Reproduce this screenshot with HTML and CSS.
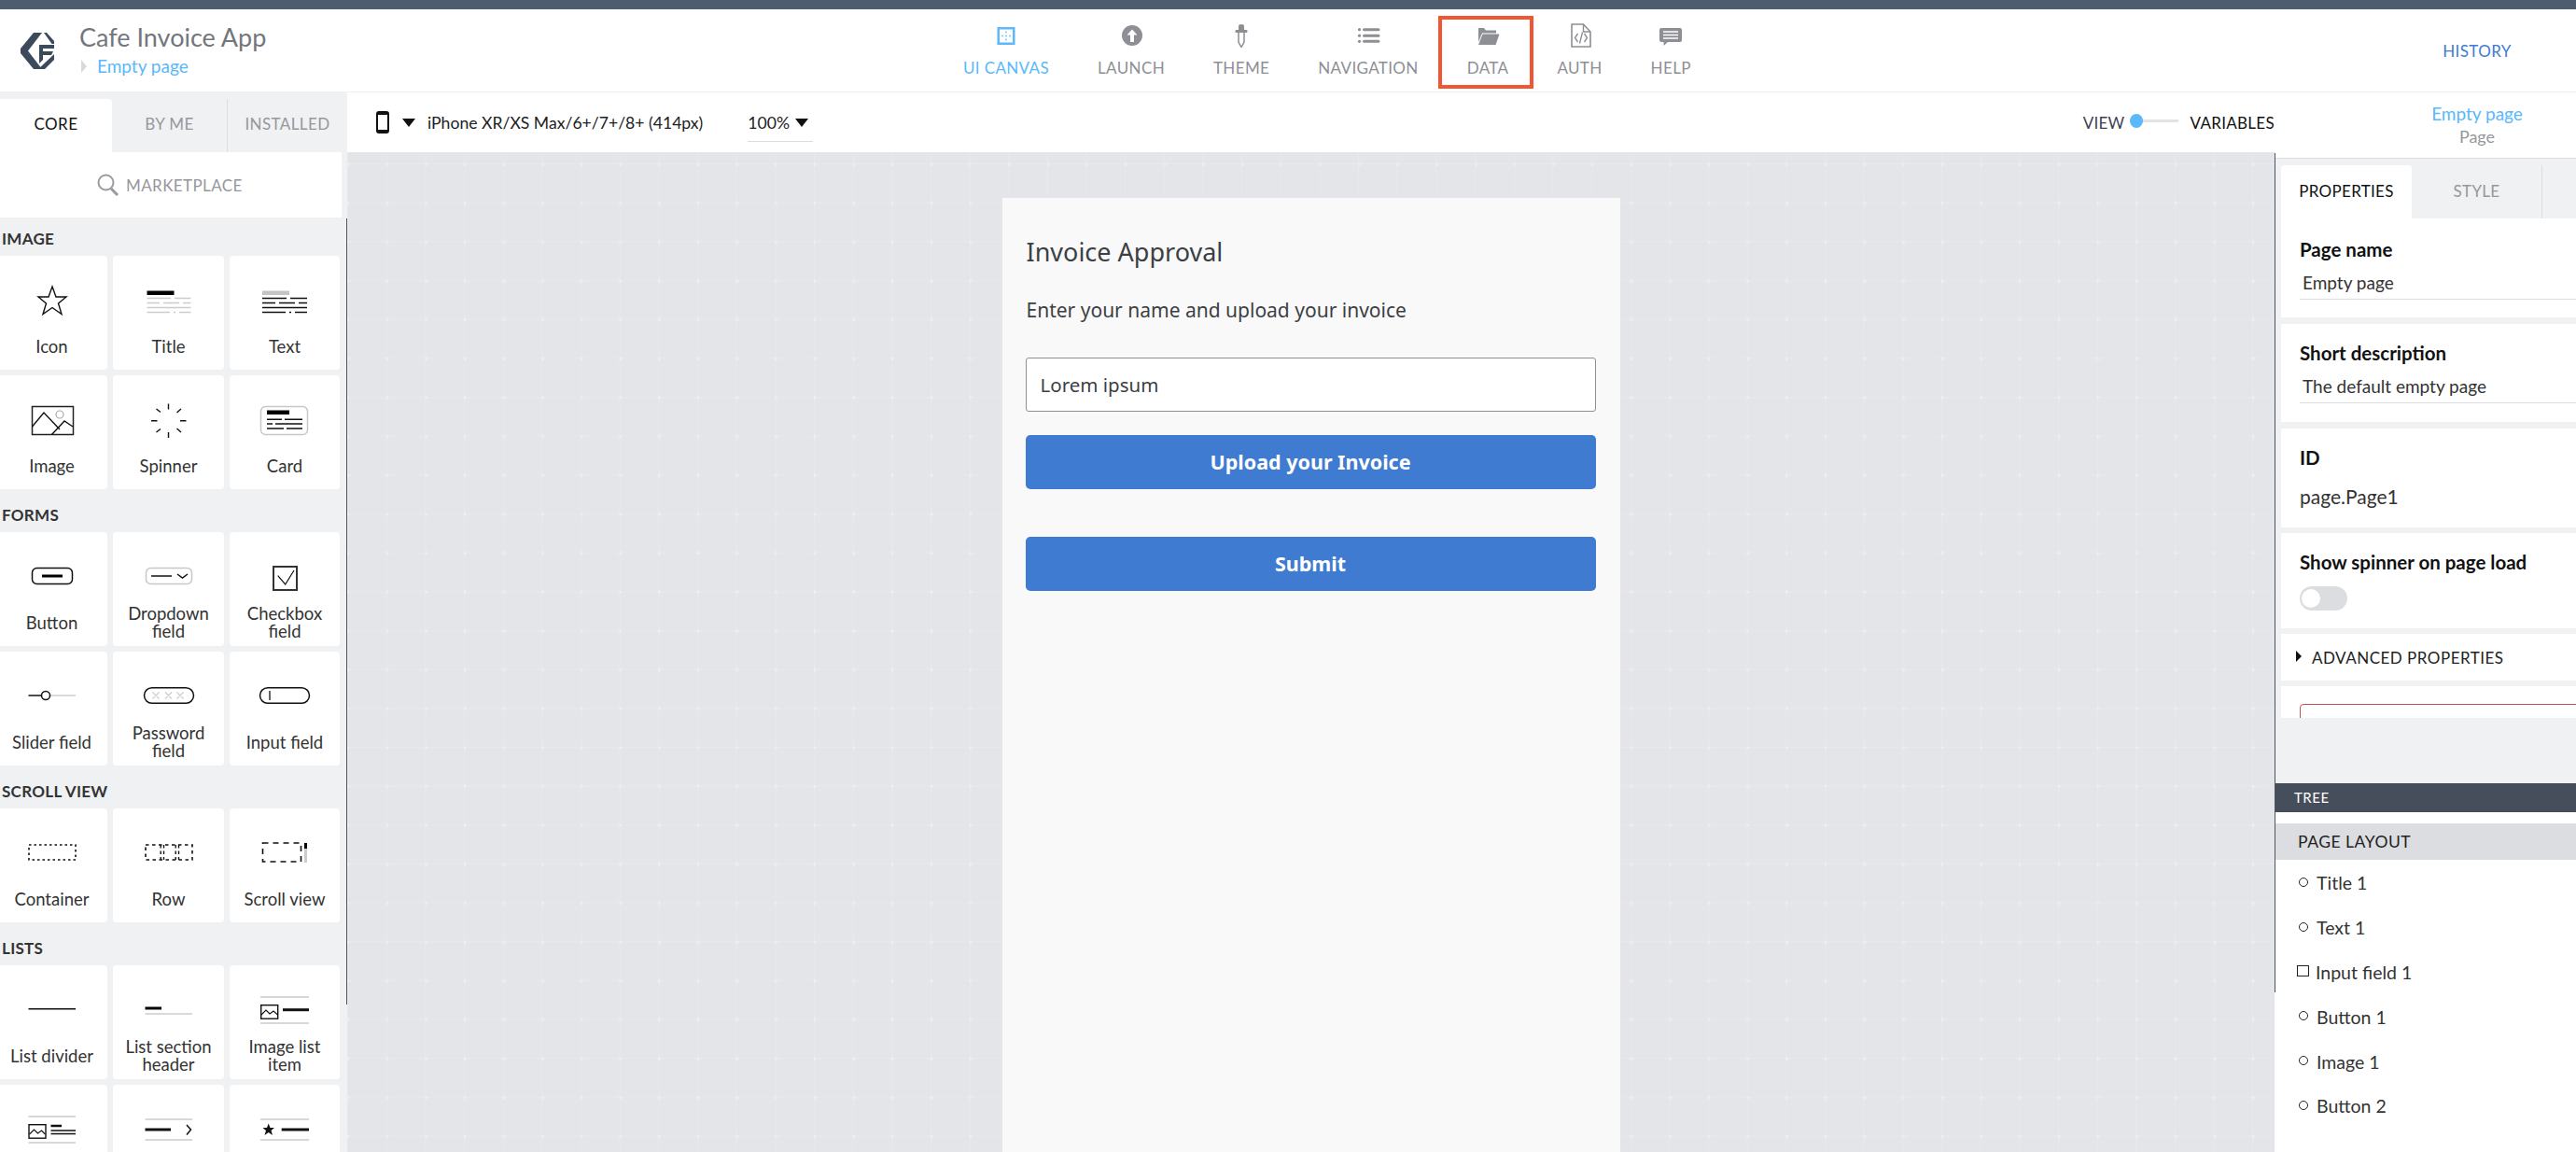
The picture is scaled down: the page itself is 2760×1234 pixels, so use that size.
FILE: index.html
```html
<!DOCTYPE html>
<html lang="en">
<head>
  <meta charset="UTF-8" />
  <title>Cafe Invoice App</title>
  <link rel="stylesheet" href="styles.css">
</head>
<body>
  <div class="topbar"></div>

  <header class="header">
    <div class="brand">
      <svg class="logo" width="36" height="39" viewBox="0 0 36 39">
        <path d="M14 0H23L8 19.5 23 39H14L0 22V17Z" />
        <path d="M25 0H28L36 9V12H33.5Z" />
        <path d="M20 13H36V17H24V20H35L33 24H24L24 29 20 33Z" />
        <path d="M36 23V29L26 39H19Z" />
      </svg>
      <div class="brand-text">
        <div class="app-name">Cafe Invoice App</div>
        <div class="crumb"><span class="crumb-arrow"></span>Empty page</div>
      </div>
    </div>

    <nav class="nav">
      <a class="nav-item active">
        <svg width="26" height="26" viewBox="0 0 26 26">
          <rect x="4.75" y="5.25" width="16.5" height="16.5" fill="none" stroke="#5ab8fb" stroke-width="2.5" />
          <g fill="#7cc6fb"><circle cx="13" cy="9.5" r="1" /><circle cx="9" cy="13.5" r="1" /><circle cx="13" cy="13.5" r="1" /><circle cx="17" cy="13.5" r="1" /><circle cx="13" cy="17.5" r="1" /></g>
        </svg>
        UI CANVAS
      </a>
      <a class="nav-item">
        <svg width="26" height="26" viewBox="0 0 26 26">
          <circle cx="14" cy="13" r="11" fill="#8e8f94" />
          <path d="M14 6.5L8.5 12.5H12V20H16V12.5H19.5Z" fill="#fff" />
        </svg>
        LAUNCH
      </a>
      <a class="nav-item">
        <svg width="26" height="26" viewBox="0 0 26 26">
          <path d="M10 7V3a3 2 0 0 1 6 0V7Z" fill="#8e8f94" />
          <rect x="6.5" y="7" width="13" height="3" rx="1" fill="#8e8f94" />
          <path d="M10 10V20L13 25.5 16 20V10" fill="none" stroke="#8e8f94" stroke-width="1.5" />
        </svg>
        THEME
      </a>
      <a class="nav-item">
        <svg width="26" height="26" viewBox="0 0 26 26">
          <g fill="#8e8f94"><circle cx="3.5" cy="6.7" r="1.6" /><circle cx="3.5" cy="13.2" r="1.6" /><circle cx="3.5" cy="19.3" r="1.6" /></g>
          <path d="M8.5 6.7H24M8.5 13.2H24M8.5 19.3H24" stroke="#8e8f94" stroke-width="3" stroke-linecap="round" />
        </svg>
        NAVIGATION
      </a>
      <a class="nav-item nav-marked">
        <svg width="26" height="26" viewBox="0 0 26 26">
          <path d="M3 5H9L11 7.5H22V10.5H7L3 20Z" fill="#8e8f94" />
          <path d="M7.5 11.5H25.5L21.5 23H3Z" fill="#8e8f94" />
        </svg>
        DATA
      </a>
      <a class="nav-item">
        <svg width="26" height="26" viewBox="0 0 26 26" fill="none" stroke="#8e8f94">
          <path d="M4 1H16.5L24 9V25H4Z" stroke-width="1.6" />
          <path d="M16.5 1V9H24" stroke-width="1.4" />
          <path d="M10.5 11L7.5 15.5 10.5 20M17.5 11L20.5 15.5 17.5 20M15.5 9.5L12.5 21.5" stroke-width="1.4" />
        </svg>
        AUTH
      </a>
      <a class="nav-item">
        <svg width="26" height="26" viewBox="0 0 26 26">
          <path d="M3 5H23A2 2 0 0 1 25 7V18A2 2 0 0 1 23 20H10L5.5 24V20H3A2 2 0 0 1 1 18V7A2 2 0 0 1 3 5Z" fill="#8e8f94" />
          <path d="M5 9H21M5 12.5H21M5 16H21" stroke="#fff" stroke-width="1.3" />
        </svg>
        HELP
      </a>
    </nav>

    <a class="history">HISTORY</a>
  </header>

  <div class="workspace">
    <aside class="sidebar">
      <div class="side-tabs">
        <div class="side-tab active">CORE</div>
        <div class="side-tab sep">BY ME</div>
        <div class="side-tab last">INSTALLED</div>
      </div>
      <div class="marketplace">
        <svg width="24" height="24" viewBox="0 0 24 24" fill="none" stroke="#9a9ba0">
          <circle cx="9.5" cy="9.5" r="8" stroke-width="2" />
          <path d="M15 16L22 23" stroke-width="3" />
        </svg>
        MARKETPLACE
      </div>

      <div class="section-label first">IMAGE</div>
      <div class="widgets">
        <div class="widget">
          <svg class="widget-icon" viewBox="0 0 56 40"><path d="M28 5L32 16H43L34.5 23 38 34.5 28 27.5 18 34.5 21.5 23 13 16H24Z" fill="none" stroke="#111" stroke-width="1.4" /></svg>
          <div class="widget-name">Icon</div>
        </div>
        <div class="widget">
          <svg class="widget-icon" viewBox="0 0 56 40">
            <rect x="4.5" y="9.5" width="29" height="4.5" fill="#000" />
            <path d="M4.5 17.5H30M34 17.5H51.5M4.5 22.5H18M22 22.5H39M43 22.5H51.5M4.5 27.5H51.5M4.5 32.5H29M33 32.5H35M39 32.5H51.5" stroke="#ccc" stroke-width="1.5" />
          </svg>
          <div class="widget-name">Title</div>
        </div>
        <div class="widget">
          <svg class="widget-icon" viewBox="0 0 56 40">
            <rect x="4" y="9.5" width="29" height="4.5" fill="#c4c4c4" />
            <path d="M4 17.5H30M34 17.5H52M4 22.5H18M22 22.5H39M43 22.5H52M4 27.5H52M4 32.5H29M33 32.5H35M39 32.5H52" stroke="#111" stroke-width="1.5" />
          </svg>
          <div class="widget-name">Text</div>
        </div>
        <div class="widget">
          <svg class="widget-icon" viewBox="0 0 56 40">
            <rect x="6.5" y="5.5" width="44" height="30" fill="none" stroke="#222" stroke-width="1.5" />
            <path d="M6.5 27L19 12 36 30M27.5 35.5L41 21 50 27" fill="none" stroke="#111" stroke-width="1.4" />
            <circle cx="36" cy="14" r="4" fill="none" stroke="#aaa" stroke-width="1.2" />
          </svg>
          <div class="widget-name">Image</div>
        </div>
        <div class="widget">
          <svg class="widget-icon" viewBox="0 0 56 40">
            <path d="M27.5 2.5V8.5M27.5 33V39M9 20.7H15.5M40 20.7H46.5M14.5 8L19 11.5M41 8L36.5 12M14.5 33L19 29.5M41 33L36.5 29" stroke="#111" stroke-width="1.4" />
          </svg>
          <div class="widget-name">Spinner</div>
        </div>
        <div class="widget">
          <svg class="widget-icon" viewBox="0 0 56 40">
            <rect x="2.5" y="5.5" width="50" height="30" rx="5" fill="none" stroke="#c8c8c8" stroke-width="1.5" />
            <rect x="9" y="9.5" width="24" height="4.5" fill="#000" />
            <path d="M9 19.3H25M28 19.3H47M9 24H15M18 24H47M9 29H27M30 29H47" stroke="#111" stroke-width="1.4" />
          </svg>
          <div class="widget-name">Card</div>
        </div>
      </div>

      <div class="section-label">FORMS</div>
      <div class="widgets">
        <div class="widget">
          <svg class="widget-icon" viewBox="0 0 56 40">
            <rect x="6.5" y="10.5" width="43" height="17" rx="5" fill="none" stroke="#111" stroke-width="1.5" />
            <path d="M17 19H39" stroke="#000" stroke-width="3" />
          </svg>
          <div class="widget-name">Button</div>
        </div>
        <div class="widget">
          <svg class="widget-icon" viewBox="0 0 56 40">
            <rect x="3.5" y="10.5" width="49" height="17" rx="5" fill="none" stroke="#c8c8c8" stroke-width="1.5" />
            <path d="M9 19H31" stroke="#111" stroke-width="1.5" />
            <path d="M37 17L42.5 21 48 17" fill="none" stroke="#111" stroke-width="1.5" />
          </svg>
          <div class="widget-name">Dropdown<br>field</div>
        </div>
        <div class="widget">
          <svg class="widget-icon" viewBox="0 0 56 40">
            <rect x="16" y="9" width="25" height="25" fill="none" stroke="#333" stroke-width="2" />
            <path d="M20.7 18.7L28.7 28 38 13" fill="none" stroke="#111" stroke-width="1.2" />
          </svg>
          <div class="widget-name">Checkbox<br>field</div>
        </div>
        <div class="widget">
          <svg class="widget-icon" viewBox="0 0 56 40">
            <path d="M2.5 19H16.5" stroke="#111" stroke-width="1.5" />
            <path d="M25.5 19H53" stroke="#ccc" stroke-width="1.5" />
            <circle cx="21" cy="19" r="4.5" fill="none" stroke="#111" stroke-width="1.5" />
          </svg>
          <div class="widget-name">Slider field</div>
        </div>
        <div class="widget">
          <svg class="widget-icon" viewBox="0 0 56 40">
            <rect x="1.5" y="10.7" width="53" height="16.6" rx="8.3" fill="none" stroke="#111" stroke-width="1.5" />
            <path d="M10.5 15.5L17.5 22.5M17.5 15.5L10.5 22.5M24 15.5L31 22.5M31 15.5L24 22.5M36.5 15.5L43.5 22.5M43.5 15.5L36.5 22.5" stroke="#ccc" stroke-width="1.2" />
          </svg>
          <div class="widget-name">Password<br>field</div>
        </div>
        <div class="widget">
          <svg class="widget-icon" viewBox="0 0 56 40">
            <rect x="1.5" y="10.7" width="53" height="16.6" rx="8.3" fill="none" stroke="#111" stroke-width="1.5" />
            <path d="M12 14V24" stroke="#111" stroke-width="1.3" />
          </svg>
          <div class="widget-name">Input field</div>
        </div>
      </div>

      <div class="section-label">SCROLL VIEW</div>
      <div class="widgets">
        <div class="widget">
          <svg class="widget-icon" viewBox="0 0 56 40">
            <rect x="3" y="11" width="50" height="16" fill="none" stroke="#111" stroke-width="1.6" stroke-dasharray="2.5 3" />
          </svg>
          <div class="widget-name">Container</div>
        </div>
        <div class="widget">
          <svg class="widget-icon" viewBox="0 0 56 40">
            <rect x="3" y="11" width="50" height="16" fill="none" stroke="#111" stroke-width="1.6" stroke-dasharray="3.5 3.5" />
            <path d="M19.2 11V27M22.5 11V27M35.2 11V27M38.5 11V27" stroke="#111" stroke-width="1.4" stroke-dasharray="3.5 3" />
          </svg>
          <div class="widget-name">Row</div>
        </div>
        <div class="widget">
          <svg class="widget-icon" viewBox="0 0 56 40">
            <rect x="4.5" y="9" width="41" height="20" fill="none" stroke="#111" stroke-width="1.6" stroke-dasharray="6 5" />
            <path d="M50.5 9V30" stroke="#ccc" stroke-width="3" />
            <path d="M50.5 9V15" stroke="#000" stroke-width="3" />
          </svg>
          <div class="widget-name">Scroll view</div>
        </div>
      </div>

      <div class="section-label">LISTS</div>
      <div class="widgets">
        <div class="widget">
          <svg class="widget-icon" viewBox="0 0 56 40"><path d="M2.5 18.7H53" stroke="#111" stroke-width="1.5" /></svg>
          <div class="widget-name">List divider</div>
        </div>
        <div class="widget">
          <svg class="widget-icon" viewBox="0 0 56 40">
            <path d="M2.5 18H20" stroke="#000" stroke-width="3" />
            <path d="M2.5 24H53" stroke="#ccc" stroke-width="1.5" />
          </svg>
          <div class="widget-name">List section<br>header</div>
        </div>
        <div class="widget">
          <svg class="widget-icon" viewBox="0 0 56 40">
            <path d="M2 6H54M2 34H54" stroke="#ccc" stroke-width="1.5" />
            <rect x="2.7" y="14.7" width="18" height="14.5" fill="none" stroke="#111" stroke-width="1.4" />
            <path d="M3 25L8 20 12 24 16 21 20.5 25" fill="none" stroke="#111" stroke-width="1.1" />
            <path d="M26 19.7H54" stroke="#111" stroke-width="3" />
          </svg>
          <div class="widget-name">Image list<br>item</div>
        </div>
        <div class="widget">
          <svg class="widget-icon" viewBox="0 0 56 40">
            <path d="M2.5 6H53M2.5 34H53" stroke="#ccc" stroke-width="1.5" />
            <rect x="3" y="14.7" width="18" height="14.5" fill="none" stroke="#111" stroke-width="1.4" />
            <path d="M3.5 25L8.5 20 12.5 24 16.5 21 20.5 25" fill="none" stroke="#111" stroke-width="1.1" />
            <path d="M26.5 16H38" stroke="#111" stroke-width="2.5" />
            <path d="M26.5 21H53M26.5 24.5H53" stroke="#111" stroke-width="1.4" />
          </svg>
        </div>
        <div class="widget">
          <svg class="widget-icon" viewBox="0 0 56 40">
            <path d="M2.5 9H53M2.5 31H53" stroke="#ccc" stroke-width="1.5" />
            <path d="M2.5 20H30" stroke="#111" stroke-width="3" />
            <path d="M47 15L51.5 20 47 25.5" fill="none" stroke="#111" stroke-width="1.5" />
          </svg>
        </div>
        <div class="widget">
          <svg class="widget-icon" viewBox="0 0 56 40">
            <path d="M2 9H54M2 31H54" stroke="#ccc" stroke-width="1.5" />
            <path d="M10.7 13.5L12.5 18H17L13.5 21 15 26 10.7 23 6.5 26 8 21 4.5 18H9Z" fill="#111" />
            <path d="M24.7 20H54" stroke="#111" stroke-width="3" />
          </svg>
        </div>
      </div>
    </aside>

    <main class="center">
      <div class="toolbar">
        <svg class="device-icon" width="14" height="24" viewBox="0 0 14 24">
          <rect x="1" y="1" width="12" height="22" rx="2" fill="none" stroke="#111" stroke-width="2" />
          <rect x="1" y="1" width="12" height="3" fill="#111" />
          <rect x="1" y="20" width="12" height="3" fill="#111" />
        </svg>
        <span class="caret"></span>
        <span class="device-name">iPhone XR/XS Max/6+/7+/8+ (414px)</span>
        <span class="zoom-select">100%<span class="caret"></span></span>
        <div class="view-switch">
          <span class="view-label">VIEW</span>
          <span class="switch-track"><span class="switch-knob"></span></span>
          <span class="view-vars">VARIABLES</span>
        </div>
      </div>

      <div class="canvas">
        <div class="phone">
          <h1 class="phone-title">Invoice Approval</h1>
          <p class="phone-text">Enter your name and upload your invoice</p>
          <div class="phone-input">Lorem ipsum</div>
          <button class="phone-btn">Upload your Invoice</button>
          <button class="phone-btn submit">Submit</button>
        </div>
      </div>
    </main>

    <aside class="inspector">
      <div class="inspector-inner">
        <div class="selected">
          <div class="selected-name">Empty page</div>
          <div class="selected-type">Page</div>
        </div>

        <div class="props-area">
          <div class="prop-tabs">
            <div class="prop-tab active">PROPERTIES</div>
            <div class="prop-tab sep">STYLE</div>
            <div class="prop-tab"></div>
          </div>

          <div class="props-scroll">
            <div class="prop prop-first">
              <div class="prop-label">Page name</div>
              <div class="prop-value field">Empty page</div>
            </div>
            <div class="prop prop-field">
              <div class="prop-label">Short description</div>
              <div class="prop-value field">The default empty page</div>
            </div>
            <div class="prop prop-id">
              <div class="prop-label">ID</div>
              <div class="prop-value id-value">page.Page1</div>
            </div>
            <div class="prop prop-toggle">
              <div class="prop-label">Show spinner on page load</div>
              <span class="toggle"><span class="toggle-knob"></span></span>
            </div>
            <div class="prop advanced"><span class="adv-arrow"></span>ADVANCED PROPERTIES</div>
            <div class="prop prop-danger"><div class="danger-box"></div></div>
          </div>
        </div>

        <div class="tree-bar">TREE</div>
        <div class="tree">
          <div class="tree-head">PAGE LAYOUT</div>
          <div class="tree-item"><span class="tree-dot"></span>Title 1</div>
          <div class="tree-item"><span class="tree-dot"></span>Text 1</div>
          <div class="tree-item"><span class="tree-dot square"></span>Input field 1</div>
          <div class="tree-item"><span class="tree-dot"></span>Button 1</div>
          <div class="tree-item"><span class="tree-dot"></span>Image 1</div>
          <div class="tree-item"><span class="tree-dot"></span>Button 2</div>
        </div>
      </div>
    </aside>
  </div>
</body>
</html>
```

FILE: styles.css
```css
* {
  box-sizing: border-box;
}
body {
  margin: 0;
  height: 100vh;
  overflow: hidden;
  background: #fff;
  font-family: Lato, "Open Sans", sans-serif;
  color: #222;
}

.topbar {
  height: 10px;
  background: #4d5c6e;
}

/* header */
.header {
  display: flex;
  height: 89px;
  border-bottom: 1px solid #f0f0f2;
}
.brand {
  display: flex;
  width: 1006px;
  padding: 25px 0 0 22px;
}
.logo {
  fill: #3c4a5d;
}
.brand-text {
  margin-left: 27px;
}
.app-name {
  margin-top: -10px;
  font-size: 27px;
  line-height: 30px;
  color: #73767d;
}
.crumb {
  display: flex;
  align-items: center;
  margin-top: 4px;
  font-size: 19px;
  line-height: 24px;
  color: #5ab8fb;
}
.crumb-arrow {
  width: 0;
  height: 0;
  margin: 0 11px 0 2px;
  border-left: 6px solid #d8d9dc;
  border-top: 7px solid transparent;
  border-bottom: 7px solid transparent;
}
.nav {
  display: flex;
}
.nav-item {
  position: relative;
  display: flex;
  flex-direction: column;
  align-items: center;
  padding: 15px 26px 0;
  font-size: 17px;
  line-height: 20px;
  letter-spacing: 0.36px;
  color: #8e8f94;
}
.nav-item svg {
  margin-bottom: 12px;
}
.nav-item.active {
  color: #5ab8fb;
}
.nav-marked::after {
  content: "";
  position: absolute;
  left: -5px;
  right: -1px;
  top: 7px;
  height: 70px;
  border: 4px solid #f15533;
}
.history {
  margin-left: auto;
  width: 212px;
  padding-top: 35px;
  text-align: center;
  font-size: 17px;
  line-height: 20px;
  letter-spacing: 0.4px;
  color: #3f7bd1;
}

/* main area */
.workspace {
  display: flex;
  height: 1135px;
}

/* left panel */
.sidebar {
  position: relative;
  flex: none;
  width: 372px;
  overflow: hidden;
  background: #f0f1f3;
}
.sidebar::after {
  content: "";
  position: absolute;
  left: 371px;
  top: 135px;
  width: 1px;
  height: 842px;
  background: #4a5464;
}
.side-tabs {
  display: flex;
  height: 64px;
  padding-top: 7px;
}
.side-tab {
  width: 123px;
  padding-top: 17px;
  text-align: center;
  font-size: 17px;
  line-height: 20px;
  letter-spacing: 0.4px;
  color: #96979c;
}
.side-tab.active {
  width: 120px;
  background: #fff;
  border-top-right-radius: 4px;
  color: #111;
}
.side-tab.sep {
  width: 124px;
  border-right: 1px solid #dcdde1;
}
.side-tab.last {
  width: 128px;
}
.marketplace {
  display: flex;
  align-items: center;
  justify-content: flex-start;
  gap: 7px;
  width: 366px;
  height: 70px;
  padding-left: 104px;
  background: #fff;
  font-size: 17px;
  letter-spacing: 0.4px;
  color: #96979c;
}
.section-label {
  height: 46px;
  padding: 17px 0 0 2px;
  font-size: 17px;
  font-weight: 700;
  line-height: 22px;
  letter-spacing: 0.3px;
  color: #333;
}
.section-label.first {
  height: 41px;
  padding-top: 12px;
}
.widgets {
  display: grid;
  grid-template-columns: 119px 119px 118px;
  grid-auto-rows: 122px;
  gap: 6px;
  margin-left: -4px;
}
.widget {
  padding-top: 28px;
  background: #fff;
  border-radius: 4px;
  text-align: center;
}
.widget-icon {
  display: block;
  width: 56px;
  height: 40px;
  margin: 0 auto;
  overflow: visible;
}
.widget-name {
  display: flex;
  align-items: center;
  justify-content: center;
  height: 38px;
  margin-top: 10px;
  font-size: 18.5px;
  line-height: 19px;
  color: #333;
}

/* center */
.center {
  flex: 1;
  min-width: 0;
  display: flex;
  flex-direction: column;
}
.toolbar {
  display: flex;
  align-items: center;
  flex: none;
  height: 64px;
  padding-left: 31px;
  font-size: 17.6px;
  color: #222;
}
.caret {
  display: inline-block;
  width: 0;
  height: 0;
  border-top: 9px solid #111;
  border-left: 7px solid transparent;
  border-right: 7px solid transparent;
}
.device-icon + .caret {
  margin-left: 14px;
}
.device-name {
  margin-left: 13px;
}
.zoom-select {
  display: flex;
  align-items: center;
  gap: 6px;
  width: 70px;
  height: 30px;
  margin-left: 48px;
  margin-top: 12px;
  padding-bottom: 10px;
  border-bottom: 1px solid #dcdde1;
}
.view-switch {
  display: flex;
  align-items: center;
  margin-left: auto;
  font-size: 17px;
  letter-spacing: 0.3px;
}
.view-label {
  color: #3c4350;
}
.switch-track {
  position: relative;
  width: 52px;
  height: 3px;
  margin: -3px 13px 0 5px;
  background: #e2e3e7;
}
.switch-knob {
  position: absolute;
  left: 0;
  top: -6px;
  width: 14px;
  height: 15px;
  border-radius: 50%;
  background: #5ab8fb;
}
.view-vars {
  color: #111;
}
.canvas {
  flex: 1;
  overflow: hidden;
  padding-top: 49px;
  background-color: #e4e5e9;
  background-image:
    radial-gradient(circle at 1px 13px, rgba(255,255,255,0.28) 1.5px, transparent 2px),
    linear-gradient(rgba(255,255,255,0.12) 1px, transparent 1px),
    linear-gradient(90deg, rgba(255,255,255,0.12) 1px, transparent 1px);
  background-size: 41.67px 41.67px;
  background-position: 0 0, 0 12px, 0 0;
}
.phone {
  width: 662px;
  height: 1200px;
  margin: 0 auto;
  padding: 40px 26px 0 25px;
  background: #f9f9f9;
  font-family: "Noto Sans", "Open Sans", sans-serif;
}
.phone-title {
  margin: 0;
  padding-left: 1px;
  font-size: 27px;
  font-weight: 400;
  line-height: 36px;
  color: #3c3f44;
}
.phone-text {
  margin: 29px 0 36px;
  padding-left: 1px;
  font-size: 21px;
  line-height: 30px;
  color: #3c3f44;
}
.phone-input {
  height: 58px;
  padding-left: 15px;
  background: #fff;
  border: 1px solid #8e9097;
  border-radius: 3px;
  font-size: 20.5px;
  line-height: 56px;
  color: #3c3f44;
}
.phone-btn {
  display: block;
  width: 100%;
  height: 58px;
  margin-top: 25px;
  padding-bottom: 3px;
  background-color: #3f7bd1;
  border: none;
  border-radius: 5px;
  color: white;
  font-family: inherit;
  font-size: 21.5px;
  font-weight: 700;
}
.phone-btn.submit {
  margin-top: 51px;
}

/* right panel */
.inspector {
  position: relative;
  flex: none;
  width: 323px;
  overflow: hidden;
}
.inspector::before {
  content: "";
  position: absolute;
  z-index: 1;
  left: 0;
  top: 65px;
  width: 1px;
  height: 899px;
  background: #4a5464;
}
.inspector-inner {
  width: 434px;
  padding-left: 1px;
}
.selected {
  height: 70px;
  padding: 11px 0 0 0;
  margin-left: -1px;
  text-align: center;
}
.selected-name {
  font-size: 19px;
  line-height: 24px;
  color: #5ab8fb;
}
.selected-type {
  font-size: 18px;
  line-height: 24px;
  color: #96979c;
}
.props-area {
  height: 670px;
  padding-top: 7px;
  border-top: 1px solid #dcdde1;
  background: #f0f1f3;
}
.prop-tabs {
  display: flex;
  height: 57px;
  margin-left: 6px;
}
.prop-tab {
  width: 140px;
  padding-top: 17px;
  text-align: center;
  font-size: 17px;
  line-height: 22px;
  letter-spacing: 0.3px;
  color: #96979c;
}
.prop-tab.active {
  background: #fff;
  border-radius: 4px 4px 0 0;
  color: #111;
}
.prop-tab.sep {
  border-right: 1px solid #dcdde1;
}
.props-scroll {
  height: 535px;
  margin-left: 6px;
  overflow: hidden;
}
.prop {
  margin-bottom: 6px;
  padding: 19px 20px 19px;
  background: #fff;
}
.prop-first {
  padding-top: 21px;
  margin-bottom: 7px;
}
.prop-field {
  padding-bottom: 20px;
  margin-bottom: 7px;
}
.prop-label {
  font-size: 20.5px;
  font-weight: 700;
  line-height: 24px;
  color: #111;
}
.prop-value {
  font-size: 19px;
  line-height: 24px;
  color: #333;
}
.prop-value.field {
  height: 30px;
  margin-top: 12px;
  padding-left: 3px;
  border-bottom: 1px solid #dcdde1;
}
.prop-id {
  padding-bottom: 21px;
}
.id-value {
  margin-top: 18px;
  font-size: 21px;
}
.prop-toggle .toggle {
  margin-top: 14px;
}
.toggle {
  position: relative;
  display: block;
  width: 51px;
  height: 26px;
  border-radius: 13px;
  background: #dcdde1;
}
.toggle-knob {
  position: absolute;
  left: 2px;
  top: 3px;
  width: 20px;
  height: 20px;
  border-radius: 50%;
  background: #fff;
}
.advanced {
  display: flex;
  align-items: center;
  height: 50px;
  padding: 0 0 0 16px;
  font-size: 17px;
  letter-spacing: 0.5px;
  color: #222;
}
.adv-arrow {
  width: 0;
  height: 0;
  margin: -2px 11px 0 0;
  border-left: 6px solid #111;
  border-top: 6px solid transparent;
  border-bottom: 6px solid transparent;
}
.danger-box {
  height: 60px;
  border: 1px solid #c0554f;
  border-radius: 4px;
}
.tree-bar {
  height: 31px;
  padding-left: 20px;
  background: #464e5b;
  font-size: 15px;
  line-height: 30px;
  letter-spacing: 0.5px;
  color: #fff;
}
.tree {
  height: 364px;
  padding-top: 12px;
  background: #fff;
}
.tree-head {
  height: 39px;
  margin-bottom: 1px;
  padding-left: 24px;
  background: #dcdde1;
  font-size: 17.5px;
  line-height: 39px;
  letter-spacing: 0.5px;
  color: #222;
}
.tree-item {
  display: flex;
  align-items: center;
  height: 47.8px;
  padding-left: 25px;
  font-size: 19.5px;
  color: #333;
}
.tree-dot {
  flex: none;
  width: 10px;
  height: 10px;
  margin: -2px 9px 0 0;
  border: 1.7px solid #222;
  border-radius: 50%;
}
.tree-dot.square {
  width: 13px;
  height: 12px;
  margin: -2px 7px 0 -2px;
  border-radius: 0;
}
```
